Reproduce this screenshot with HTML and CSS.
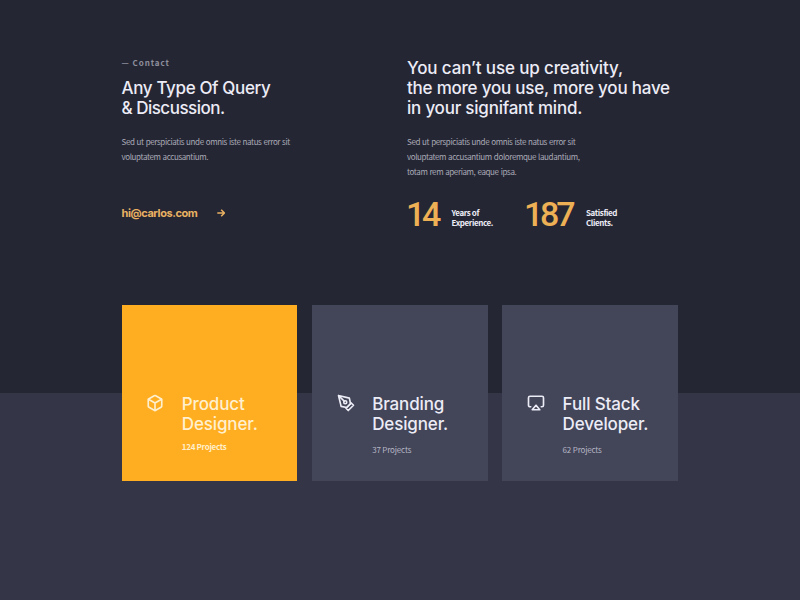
FILE: index.html
```html
<!DOCTYPE html>
<html lang="en">
<head>
<meta charset="utf-8">
<title>Carlos – Contact</title>
<link rel="stylesheet" href="styles.css">
</head>
<body>
<main class="page">
  <section class="intro">
    <div class="contact">
      <p class="eyebrow">— Contact</p>
      <h1 class="title">Any Type Of Query<br><span class="snug">&amp; Discussion.</span></h1>
      <p class="copy">Sed ut perspiciatis unde omnis iste natus error sit<br>voluptatem accusantium.</p>
      <a class="mail" href="mailto:hi@carlos.com"><span>hi@carlos.com</span>
        <svg class="arrow" viewBox="0 0 8 8"><path d="M0.3 4H7.3M4.2 0.8L7.4 4L4.2 7.2"/></svg></a>
    </div>
    <div class="about">
      <h2 class="title"><span class="loose">You can’t use up creativity,</span><br>the more you use, more you have<br>in your signifant mind.</h2>
      <p class="copy">Sed ut perspiciatis unde omnis iste natus error sit<br>voluptatem accusantium doloremque laudantium,<br>totam rem aperiam, eaque ipsa.</p>
      <div class="stats">
        <div class="stat"><strong class="number">14</strong><p class="label">Years of<br>Experience.</p></div>
        <div class="stat"><strong class="number">187</strong><p class="label">Satisfied<br>Clients.</p></div>
      </div>
    </div>
  </section>
  <section class="cards">
    <article class="card active">
      <svg class="icon" viewBox="0 0 24 24"><path d="M21 16V8a2 2 0 0 0-1-1.73l-7-4a2 2 0 0 0-2 0l-7 4A2 2 0 0 0 3 8v8a2 2 0 0 0 1 1.73l7 4a2 2 0 0 0 2 0l7-4A2 2 0 0 0 21 16z"/><path d="M3.27 6.96L12 12.01l8.73-5.05M12 22.08V12"/></svg>
      <div><h3 class="title">Product<br>Designer.</h3><p class="count">124 Projects</p></div>
    </article>
    <article class="card">
      <svg class="icon" viewBox="0 0 24 24"><path d="M12 19l7-7 3 3-7 7-3-3z"/><path d="M18 13l-1.5-7.5L2 2l3.5 14.5L13 18l5-5zM2 2l7.586 7.586"/><circle cx="11" cy="11" r="2"/></svg>
      <div><h3 class="title">Branding<br>Designer.</h3><p class="count">37 Projects</p></div>
    </article>
    <article class="card">
      <svg class="icon" viewBox="0 0 24 24"><path d="M5 17H4a2 2 0 0 1-2-2V5a2 2 0 0 1 2-2h16a2 2 0 0 1 2 2v10a2 2 0 0 1-2 2h-1"/><path d="M12 15l5 6H7l5-6z"/></svg>
      <div><h3 class="title">Full Stack<br>Developer.</h3><p class="count">62 Projects</p></div>
    </article>
  </section>
</main>
</body>
</html>
```
FILE: styles.css
```css
* { box-sizing: border-box; }
body { margin: 0; color: #ececf6; font-family: "Noto Sans CJK JP", sans-serif; }
h1, h2, h3, p { margin: 0; }
.page { height: 600px; padding: 56px 121.5px 0; background: linear-gradient(#252634 393px, #343547 393px); overflow: hidden; }
.intro { display: grid; grid-template-columns: 285.5px 1fr; height: 249px; }
.title { font: 500 17px/20px Inter, sans-serif; letter-spacing: -0.13px; white-space: nowrap; }
.contact .title { letter-spacing: -0.36px; }
.contact .snug { letter-spacing: -0.5px; }
.about .title { letter-spacing: -0.22px; }
.about .loose { letter-spacing: -0.13px; }
.eyebrow { font: 700 8px/14px "Noto Sans CJK JP", sans-serif; letter-spacing: 0.95px; color: #8e8f9c; margin-bottom: 8px; }
.copy { font-size: 8px; line-height: 15.2px; letter-spacing: -0.38px; word-spacing: 0.6px; color: #a9aab6; margin-top: 16px; white-space: nowrap; }
.mail { display: flex; align-items: center; gap: 20px; margin-top: 41.5px; color: #e9b162; font: 700 11px/14px Inter, sans-serif; letter-spacing: -0.42px; text-decoration: none; }
.arrow { width: 8px; height: 8px; fill: none; stroke: currentColor; stroke-width: 1.5; }
.about { padding-top: 2px; }
.stats { display: flex; margin-top: 15px; }
.stat { display: flex; width: 118px; }
.stat + .stat { width: auto; }
.number { width: 44.5px; font: 500 34px/38px Roboto, sans-serif; letter-spacing: -3.2px; text-indent: -1px; color: #edb055; }
.stat + .stat .number { width: 61px; }
.label { font: 700 8px/10px "Noto Sans CJK JP", sans-serif; letter-spacing: -0.38px; margin-top: 13.5px; white-space: nowrap; }
.cards { display: grid; grid-template-columns: repeat(3, 175.8px); gap: 14.6px; }
.card { display: flex; height: 176px; padding: 89px 0 0 25px; background: #434559; }
.icon { width: 18px; height: 18px; fill: none; stroke: currentColor; stroke-width: 2.2; stroke-linecap: round; stroke-linejoin: round; margin-right: 17.3px; }
.active { background: #ffad21; color: #fff0cf; }
.active .icon { margin: 0 18.3px 0 -1px; }
.count { font-size: 8px; line-height: 12px; letter-spacing: -0.17px; color: #b6b7c4; margin-top: 9.5px; }
.active .count { color: #ffefcc; font-weight: 700; letter-spacing: -0.3px; margin-top: 6.5px; }
```
